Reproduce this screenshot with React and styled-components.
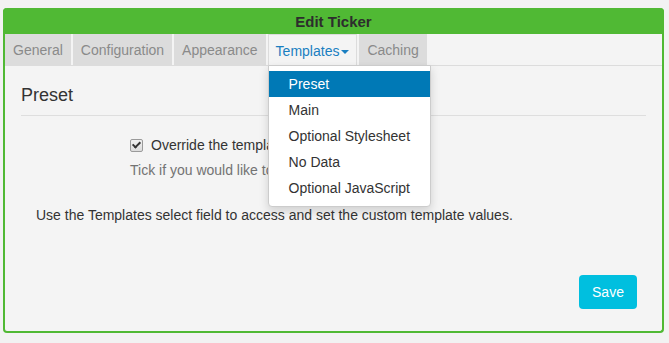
import React from 'react';
import styled, { createGlobalStyle } from 'styled-components';

const GlobalStyle = createGlobalStyle`
  body {
    margin: 0;
    background: #f2f2f2;
    font-family: "Liberation Sans", Arial, sans-serif;
    font-size: 14px;
    color: #333;
  }
`;

const Page = styled.div`
  padding: 8px 5px 8px 3px;
`;

const Panel = styled.div`
  width: 657px;
  height: 323px;
  border: 2px solid #50b934;
  border-top: none;
  border-radius: 4px;
  background: #f4f4f4;
  display: flex;
  flex-direction: column;
`;

const Header = styled.div`
  height: 26px;
  background: #50b934;
  border-radius: 4px 4px 0 0;
  margin: 0 -2px;
  display: flex;
  align-items: center;
  justify-content: center;
  font-weight: bold;
  font-size: 15px;
  color: #2d2d2d;
`;

const TabBar = styled.div`
  display: flex;
  gap: 2px;
  height: 31px;
  border-bottom: 1px solid #dcdcdc;
`;

const Tab = styled.div`
  position: relative;
  display: flex;
  align-items: center;
  gap: 2px;
  padding: 0 ${p => (p.$active ? '7px' : '8px')};
  background: ${p => (p.$active ? '#f4f4f4' : '#dcdcdc')};
  color: ${p => (p.$active ? '#1a7fc1' : '#8a8a8a')};
  border: ${p => (p.$active ? '1px solid #dcdcdc' : 'none')};
  border-bottom: none;
  margin-bottom: ${p => (p.$active ? '-1px' : '0')};
`;

const Caret = styled.span`
  width: 0;
  height: 0;
  border-left: 4px solid transparent;
  border-right: 4px solid transparent;
  border-top: 4px solid #1a7fc1;
  margin-top: 2px;
`;

const Menu = styled.ul`
  position: absolute;
  top: calc(100% - 1px);
  left: -1px;
  width: 161px;
  margin: 0;
  padding: 5px 0;
  list-style: none;
  background: #fff;
  border: 1px solid #ccc;
  border-radius: 0 0 4px 4px;
  box-shadow: 0 4px 10px rgba(0, 0, 0, 0.15);
  color: #333;
  z-index: 2;
`;

const MenuItem = styled.li`
  height: 26px;
  line-height: 26px;
  padding-left: 20px;
  background: ${p => (p.$active ? '#0079b6' : 'transparent')};
  color: ${p => (p.$active ? '#fff' : '#333')};
`;

const Body = styled.div`
  flex: 1;
  padding: 0 16px;
  display: flex;
  flex-direction: column;
`;

const Heading = styled.h3`
  margin: 19px 0 0;
  padding-bottom: 10px;
  font-size: 18px;
  font-weight: normal;
  line-height: 20px;
  border-bottom: 1px solid #dedede;
`;

const FieldGroup = styled.div`
  padding-left: 109px;
  margin-top: 21px;
`;

const CheckRow = styled.label`
  display: flex;
  align-items: center;
  gap: 8px;
  height: 16px;
`;

const Check = styled.input`
  appearance: none;
  display: grid;
  place-content: center;
  width: 13px;
  height: 13px;
  margin: 0;
  border: 1px solid #9a9a9a;
  border-radius: 2px;
  background: linear-gradient(#f0f0f0, #dcdcdc);

  &:checked::after {
    content: '';
    width: 3px;
    height: 6px;
    margin-top: -2px;
    border-right: 2px solid #333;
    border-bottom: 2px solid #333;
    transform: rotate(45deg);
  }
`;

const Help = styled.div`
  margin-top: 9px;
  color: #737373;
  line-height: 16px;
`;

const Note = styled.p`
  margin: 29px 0 0;
  padding-left: 15px;
  line-height: 16px;
`;

const Footer = styled.div`
  display: flex;
  justify-content: flex-end;
  padding-right: 9px;
  margin-top: 52px;
`;

const SaveButton = styled.button`
  width: 58px;
  height: 34px;
  border: none;
  border-radius: 4px;
  background: #00bfdf;
  color: #fff;
  font-family: inherit;
  font-size: 14px;
`;

const tabs = ['General', 'Configuration', 'Appearance', 'Templates', 'Caching'];
const templates = ['Preset', 'Main', 'Optional Stylesheet', 'No Data', 'Optional JavaScript'];

export default function App() {
  return (
    <>
      <GlobalStyle />
      <Page>
        <Panel>
          <Header>Edit Ticker</Header>
          <TabBar>
            {tabs.map(t => {
              const open = t === 'Templates';
              return (
                <Tab key={t} $active={open}>
                  {t}
                  {open && <Caret />}
                  {open && (
                    <Menu>
                      {templates.map((m, i) => (
                        <MenuItem key={m} $active={i === 0}>{m}</MenuItem>
                      ))}
                    </Menu>
                  )}
                </Tab>
              );
            })}
          </TabBar>
          <Body>
            <Heading>Preset</Heading>
            <FieldGroup>
              <CheckRow>
                <Check type="checkbox" defaultChecked />
                Override the template presets
              </CheckRow>
              <Help>Tick if you would like to override the presets.</Help>
            </FieldGroup>
            <Note>Use the Templates select field to access and set the custom template values.</Note>
            <Footer>
              <SaveButton>Save</SaveButton>
            </Footer>
          </Body>
        </Panel>
      </Page>
    </>
  );
}
